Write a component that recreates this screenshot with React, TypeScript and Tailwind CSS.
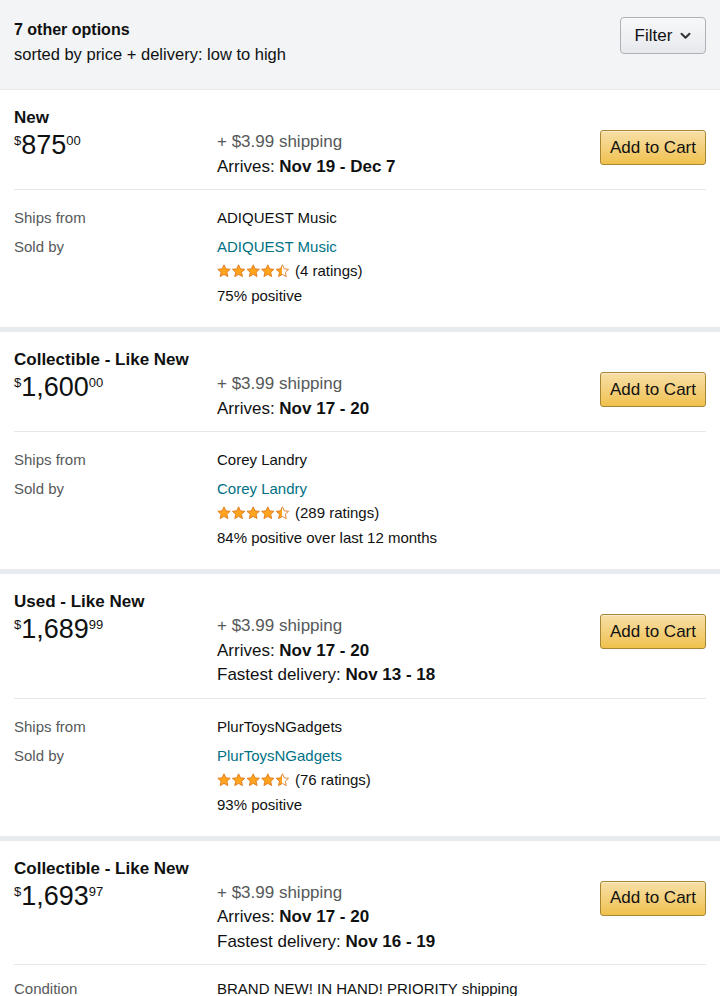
import React from "react";

type Offer = {
  condition: string;
  whole: string;
  frac: string;
  arrives: string;
  fastest?: string;
  shipsFrom?: string;
  soldBy?: string;
  ratings?: string;
  positive?: string;
  conditionNote?: string;
};

const offers: Offer[] = [
  {
    condition: "New",
    whole: "875",
    frac: "00",
    arrives: "Nov 19 - Dec 7",
    shipsFrom: "ADIQUEST Music",
    soldBy: "ADIQUEST Music",
    ratings: "(4 ratings)",
    positive: "75% positive",
  },
  {
    condition: "Collectible - Like New",
    whole: "1,600",
    frac: "00",
    arrives: "Nov 17 - 20",
    shipsFrom: "Corey Landry",
    soldBy: "Corey Landry",
    ratings: "(289 ratings)",
    positive: "84% positive over last 12 months",
  },
  {
    condition: "Used - Like New",
    whole: "1,689",
    frac: "99",
    arrives: "Nov 17 - 20",
    fastest: "Nov 13 - 18",
    shipsFrom: "PlurToysNGadgets",
    soldBy: "PlurToysNGadgets",
    ratings: "(76 ratings)",
    positive: "93% positive",
  },
  {
    condition: "Collectible - Like New",
    whole: "1,693",
    frac: "97",
    arrives: "Nov 17 - 20",
    fastest: "Nov 16 - 19",
    conditionNote: "BRAND NEW! IN HAND! PRIORITY shipping",
  },
];

const STAR =
  "M7 0.8 L8.85 4.85 L13.2 5.3 L9.95 8.25 L10.85 12.6 L7 10.4 L3.15 12.6 L4.05 8.25 L0.8 5.3 L5.15 4.85 Z";

function Stars() {
  return (
    <svg width="74" height="14" viewBox="0 0 74 14" className="shrink-0">
      <defs>
        <linearGradient id="half" x1="0" x2="1" y1="0" y2="0">
          <stop offset="50%" stopColor="#ffa41c" />
          <stop offset="50%" stopColor="#ffffff" />
        </linearGradient>
      </defs>
      {[0, 1, 2, 3, 4].map((i) => (
        <path
          key={i}
          d={STAR}
          transform={`translate(${i * 14.6},0)`}
          fill={i < 4 ? "#ffa41c" : "url(#half)"}
          stroke="#de7921"
          strokeWidth="0.9"
          strokeLinejoin="round"
        />
      ))}
    </svg>
  );
}

function AddToCart() {
  return (
    <button className="shrink-0 w-[106px] h-[35px] rounded-[3px] border border-[#a88734] bg-gradient-to-b from-[#f7dfa5] to-[#f0c14b] text-[17px] text-[#111] shadow-[inset_0_1px_0_rgba(255,255,255,0.4)]">
      Add to Cart
    </button>
  );
}

function OfferCard({ o }: { o: Offer }) {
  return (
    <div className="bg-white px-[14px] pt-[16px]">
      <div className="text-[17px] font-bold leading-[24px] text-[#0f1111]">{o.condition}</div>
      <div className="flex items-start pb-[10px]">
        <div className="w-[203px] shrink-0 flex items-start text-[#0f1111]">
          <span className="text-[13px] leading-[22px]">$</span>
          <span className="text-[27px] leading-[30px]">{o.whole}</span>
          <span className="text-[13px] leading-[22px]">{o.frac}</span>
        </div>
        <div className="flex-1 text-[17px] leading-[24.5px] text-[#0f1111]">
          <div className="text-[#565959]">+ $3.99 shipping</div>
          <div>
            Arrives: <span className="font-bold">{o.arrives}</span>
          </div>
          {o.fastest && (
            <div>
              Fastest delivery: <span className="font-bold">{o.fastest}</span>
            </div>
          )}
        </div>
        <div>
          <AddToCart />
        </div>
      </div>
      <div className="border-t border-[#e7e7e7]" />
      {o.conditionNote ? (
        <div className="pt-[14px] pb-[21px] flex text-[15px] leading-5">
          <div className="w-[203px] shrink-0 text-[#565959]">Condition</div>
          <div className="text-[#0f1111]">{o.conditionNote}</div>
        </div>
      ) : (
        <div className="pt-[18px] pb-[21px] text-[15px] leading-5">
          <div className="flex">
            <div className="w-[203px] shrink-0 text-[#565959]">Ships from</div>
            <div className="text-[#0f1111]">{o.shipsFrom}</div>
          </div>
          <div className="flex mt-[9px]">
            <div className="w-[203px] shrink-0 text-[#565959]">Sold by</div>
            <div className="flex flex-col">
              <div className="text-[#007185]">{o.soldBy}</div>
              <div className="flex items-center gap-[4px] mt-[4px] text-[#0f1111]">
                <Stars />
                <span>{o.ratings}</span>
              </div>
              <div className="mt-[5px] text-[#0f1111]">{o.positive}</div>
            </div>
          </div>
        </div>
      )}
    </div>
  );
}

export default function App() {
  return (
    <div
      className="w-[720px] min-h-[996px] bg-white"
      style={{ fontFamily: '"Liberation Sans", Arial, sans-serif' }}
    >
      <div className="h-[90px] bg-[#f3f4f5] border-b border-[#e7e7e7] px-[14px] flex items-start justify-between">
        <div className="pt-[18px] text-[16px] leading-[24px] text-[#0f1111]">
          <div className="font-bold">7 other options</div>
          <div className="text-[16.5px]">sorted by price + delivery: low to high</div>
        </div>
        <button className="mt-[17px] w-[86px] h-[37px] rounded-[4px] border border-[#adb1b8] bg-gradient-to-b from-[#f7f8fa] to-[#e7e9ec] flex items-center justify-center gap-[8px] text-[17px] text-[#0f1111]">
          <span>Filter</span>
          <svg width="11" height="8" viewBox="0 0 11 8">
            <path d="M1.5 1.8 L5.5 5.8 L9.5 1.8" fill="none" stroke="#333" strokeWidth="2" strokeLinecap="round" strokeLinejoin="round" />
          </svg>
        </button>
      </div>
      {offers.map((o, i) => (
        <React.Fragment key={i}>
          {i > 0 && <div className="h-[5px] bg-[#e7ebef]" />}
          <OfferCard o={o} />
        </React.Fragment>
      ))}
    </div>
  );
}
